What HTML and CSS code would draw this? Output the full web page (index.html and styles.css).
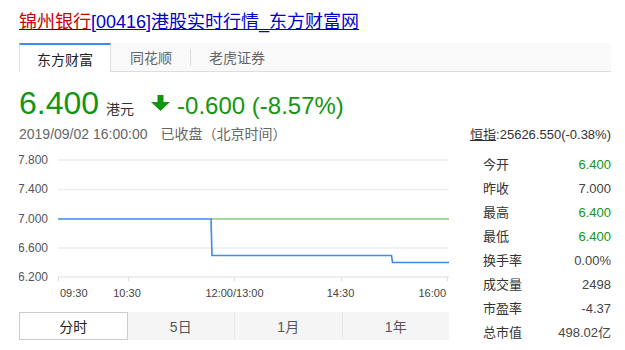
FILE: index.html
```html
<!DOCTYPE html>
<html lang="zh-CN">
<head>
  <meta charset="UTF-8" />
  <title>锦州银行 港股实时行情</title>
  <link rel="stylesheet" href="styles.css">
</head>
<body>
  <h1 class="title"><a href="#"><span class="name">锦州银行</span>[00416]港股实时行情_东方财富网</a></h1>

  <div class="tabs">
    <a class="tab active" href="#">东方财富</a>
    <a class="tab" href="#">同花顺</a>
    <span class="sep"></span>
    <a class="tab" href="#">老虎证券</a>
  </div>

  <div class="quote">
    <span class="price">6.400</span>
    <span class="unit">港元</span>
    <svg class="arrow" width="19" height="16" viewBox="0 0 19 16">
      <path d="M6.5 0h6v7h6.5l-9.5 9-9.5-9h6.5z" fill="#129612"/>
    </svg>
    <span class="change">-0.600 (-8.57%)</span>
  </div>

  <div class="meta">
    <span class="time">2019/09/02 16:00:00<span class="status">已收盘（北京时间）</span></span>
    <span class="index"><a href="#">恒指</a>:25626.550(-0.38%)</span>
  </div>

  <div class="main">
    <div class="chart-col">
      <svg class="chart" width="430" height="169" viewBox="0 0 430 169">
        <g class="grid">
          <line x1="39" y1="17" x2="430" y2="17"/>
          <line x1="39" y1="46.5" x2="430" y2="46.5"/>
          <line x1="39" y1="105" x2="430" y2="105"/>
        </g>
        <line class="axis" x1="39" y1="134" x2="430" y2="134"/>
        <g class="ticks">
          <line x1="39.5" y1="134" x2="39.5" y2="138"/>
          <line x1="109.5" y1="134" x2="109.5" y2="138"/>
          <line x1="215.5" y1="134" x2="215.5" y2="138"/>
          <line x1="322.5" y1="134" x2="322.5" y2="138"/>
          <line x1="428.5" y1="134" x2="428.5" y2="138"/>
        </g>
        <g class="ylab">
          <text x="29" y="21">7.800</text>
          <text x="29" y="50">7.400</text>
          <text x="29" y="80">7.000</text>
          <text x="29" y="109">6.600</text>
          <text x="29" y="138">6.200</text>
        </g>
        <g class="xlab">
          <text x="41" y="154">09:30</text>
          <text x="108" y="154" text-anchor="middle">10:30</text>
          <text x="215.5" y="154" text-anchor="middle">12:00/13:00</text>
          <text x="321.5" y="154" text-anchor="middle">14:30</text>
          <text x="427" y="154" text-anchor="end">16:00</text>
        </g>
        <line class="prev" x1="192" y1="76" x2="430" y2="76"/>
        <polyline class="line" points="39,76 192,76 193,112.5 372.5,112.5 373.5,119.5 430,119.5"/>
      </svg>
      <div class="periods">
        <button class="active">分时</button>
        <button>5日</button>
        <button>1月</button>
        <button>1年</button>
      </div>
    </div>

    <ul class="stats">
      <li><span>今开</span><b class="down">6.400</b></li>
      <li><span>昨收</span><b>7.000</b></li>
      <li><span>最高</span><b class="down">6.400</b></li>
      <li><span>最低</span><b class="down">6.400</b></li>
      <li><span>换手率</span><b>0.00%</b></li>
      <li><span>成交量</span><b>2498</b></li>
      <li><span>市盈率</span><b>-4.37</b></li>
      <li><span>总市值</span><b>498.02亿</b></li>
    </ul>
  </div>
</body>
</html>
```

FILE: styles.css
```css
body {
  margin: 0;
  padding: 12px 14px 0 19px;
  background: #fff;
  color: #333;
  font-family: "Liberation Sans", "Noto Sans CJK SC", sans-serif;
}

.title {
  margin: 0;
  font-size: 18px;
  font-weight: normal;
  line-height: 20px;
  white-space: nowrap;
}
.title a { color: #00c; text-decoration: underline; }
.title .name { color: #c00; }

/* tabs */
.tabs {
  display: flex;
  align-items: center;
  margin-top: 11px;
  height: 28px;
  background: #f9f9f9;
  border-bottom: 1px solid #ddd;
}
.tab {
  display: flex; align-items: center;
  height: 28px;
  padding: 0 18px;
  font-size: 14px;
  color: #666;
  text-decoration: none;
  box-sizing: border-box;
}
.tab + .tab { margin-left: 1px; }
.tab.active {
  padding: 0 17px;
  height: 29px;
  margin-bottom: -1px;
  background: #fff;
  color: #222;
  border-top: 2px solid #3d8fe8;
  border-left: 1px solid #ddd;
  border-right: 1px solid #ddd;
  margin-left: 0;
}
.sep { width: 1px; height: 17px; background: #ddd; }

/* quote */
.quote {
  display: flex;
  align-items: baseline;
  margin-top: 13px;
  height: 38px;
  color: #129612;
}
.price { font-size: 32px; line-height: 36px; }
.unit { font-size: 14px; color: #333; margin-left: 7px; }
.arrow { margin-left: 17px; align-self: center; margin-top: -2px; }
.change { font-size: 24px; margin-left: 7px; }

.meta {
  display: flex;
  justify-content: space-between;
  align-items: center;
  height: 20px;
  font-size: 14px;
  color: #666;
}
.status { margin-left: 13px; }
.index { font-size: 13px; color: #333; }
.index a { color: #333; }

/* chart + stats */
.main { display: flex; gap: 34px; }
.chart-col { width: 430px; }
.chart { display: block; font-size: 12px; font-family: "Liberation Sans", sans-serif; }
.grid line { stroke: #eee; stroke-width: 1.5; }
.axis, .ticks line { stroke: #ddd; stroke-width: 1; }
.ylab text { fill: #555; text-anchor: end; font-size: 12px; }
.xlab text { fill: #444; font-size: 11px; }
.prev { stroke: #a7d69f; stroke-width: 2; }
.line { fill: none; stroke: #3d8ae8; stroke-width: 1.6; }

.periods { display: flex; height: 28px; background: #f5f5f5; margin-top: 0; }
.periods button {
  flex: 1;
  border: none;
  border-left: 1px solid #e8e8e8;
  background: transparent;
  font: 14px "Liberation Sans", "Noto Sans CJK SC", sans-serif;
  color: #555;
  padding: 0;
}
.periods button.active {
  background: #fff;
  border: 1px solid #ccc;
  color: #222;
}
.periods button.active + button { border-left: none; }

.stats {
  list-style: none;
  margin: 10px 0 0;
  padding: 0;
  width: 128px;
  font-size: 13px;
}
.stats li {
  display: flex;
  justify-content: space-between;
  line-height: 24px;
}
.stats span { color: #333; }
.stats b { font-weight: normal; color: #444; }
.stats b.down { color: #129612; }
```
